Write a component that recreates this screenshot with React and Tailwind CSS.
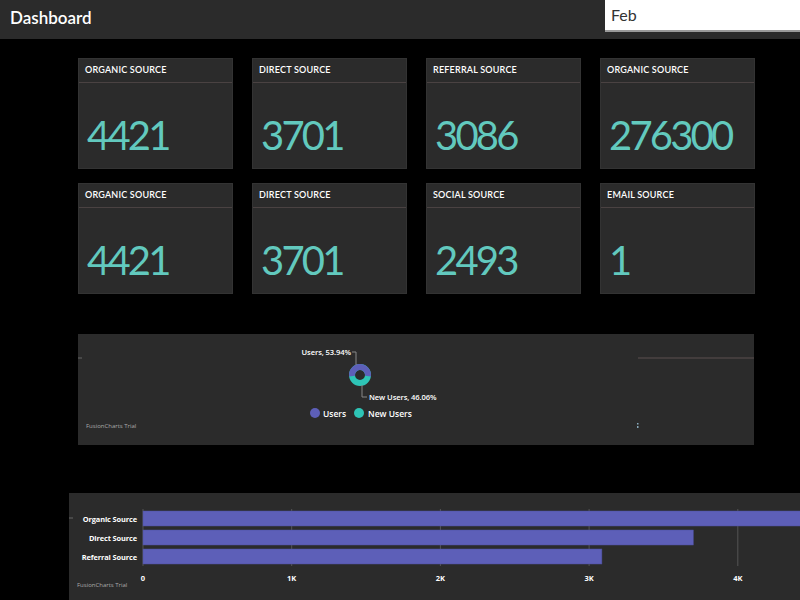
const CARDS = [
  { title: 'ORGANIC SOURCE', value: '4421' },
  { title: 'DIRECT SOURCE', value: '3701' },
  { title: 'REFERRAL SOURCE', value: '3086' },
  { title: 'ORGANIC SOURCE', value: '276300' },
  { title: 'ORGANIC SOURCE', value: '4421' },
  { title: 'DIRECT SOURCE', value: '3701' },
  { title: 'SOCIAL SOURCE', value: '2493' },
  { title: 'EMAIL SOURCE', value: '1' },
];

const BARS = [
  { label: 'Organic Source', value: 4421 },
  { label: 'Direct Source', value: 3701 },
  { label: 'Referral Source', value: 3086 },
];

const chartFont = { fontFamily: '"Open Sans", "Liberation Sans", sans-serif' };

function StatCard({ title, value }) {
  return (
    <div className="h-[111px] bg-[#2b2b2b] border border-[#333] flex flex-col">
      <div className="h-[24px] px-[6px] pt-[5px] border-b border-[#4a4242] text-[9px] leading-[11px] font-semibold text-white tracking-[0.2px]">
        {title}
      </div>
      <div className="flex-1 flex items-end px-[8px] pb-[13px]">
        <span className="text-[40px] leading-[40px] text-[#62c9be] tracking-[-2.8px]">{value}</span>
      </div>
    </div>
  );
}

function DonutPanel() {
  const r = 8;
  const c = 2 * Math.PI * r;
  const users = 0.5394;
  return (
    <div className="mt-[40px] w-[676px] h-[111px] bg-[#2b2b2b]">
      <svg width="676" height="111" style={chartFont}>
        <line x1="0" y1="24" x2="4" y2="24" stroke="#666" />
        <line x1="560" y1="24" x2="676" y2="24" stroke="#4d4545" strokeWidth="1.5" />
        <circle cx="282" cy="41" r={r} fill="none" stroke="#2ec4b6" strokeWidth="6" />
        <circle
          cx="282"
          cy="41"
          r={r}
          fill="none"
          stroke="#5d5fb8"
          strokeWidth="6"
          strokeDasharray={`${c * users} ${c}`}
          transform="rotate(172 282 41)"
        />
        <polyline points="274,18 278,18 278,31" fill="none" stroke="#888" strokeWidth="1" />
        <polyline points="284,51 284,63 289,63" fill="none" stroke="#888" strokeWidth="1" />
        <text x="273" y="21" textAnchor="end" fontSize="7.6" fill="#fff" fontWeight="600" letterSpacing="-0.1">Users, 53.94%</text>
        <text x="291" y="66" fontSize="7.6" fill="#fff" fontWeight="600" letterSpacing="-0.1">New Users, 46.06%</text>
        <circle cx="237" cy="79" r="5" fill="#5d5fb8" />
        <text x="245" y="82.5" fontSize="8.5" fill="#fff" fontWeight="600">Users</text>
        <circle cx="281" cy="79" r="5" fill="#2ec4b6" />
        <text x="290" y="82.5" fontSize="8.5" fill="#fff" fontWeight="600">New Users</text>
        <text x="8" y="94" fontSize="6" fill="#aaa">FusionCharts Trial</text>
        <rect x="559" y="89" width="1.5" height="1.5" fill="#8ab" />
        <rect x="559" y="92" width="1.5" height="2" fill="#8ab" />
      </svg>
    </div>
  );
}

function BarPanel() {
  const x0 = 74;
  const perK = 148.7;
  const ticks = [0, 1, 2, 3, 4];
  return (
    <div className="mt-[48px] -ml-[9px] w-[731px] h-[108px] bg-[#2b2b2b] overflow-hidden">
      <svg width="731" height="108" style={chartFont}>
        <line x1="0" y1="25" x2="4" y2="25" stroke="#666" />
        {ticks.map((t) => (
          <line key={t} x1={x0 + t * perK} y1="16" x2={x0 + t * perK} y2="73" stroke="#555" strokeWidth="1" />
        ))}
        {BARS.map((b, i) => {
          const y = 18 + i * 19;
          return (
            <g key={b.label}>
              <rect x={x0} y={y} width={(b.value / 1000) * perK} height="15" fill="#5d5fb8" stroke="#4d4f9e" strokeWidth="0.5" />
              <text x="68" y={y + 10.5} textAnchor="end" fontSize="7.4" fontWeight="700" fill="#fff" letterSpacing="-0.1">{b.label}</text>
            </g>
          );
        })}
        {ticks.map((t) => (
          <text key={t} x={x0 + t * perK} y="88" textAnchor="middle" fontSize="7.5" fontWeight="700" fill="#fff">
            {t === 0 ? '0' : `${t}K`}
          </text>
        ))}
        <text x="8" y="94" fontSize="6" fill="#aaa">FusionCharts Trial</text>
      </svg>
    </div>
  );
}

export default function App() {
  return (
    <div className="w-[800px] h-[600px] bg-black overflow-hidden font-['Lato',sans-serif]">
      <header className="h-[39px] bg-[#2b2b2b] flex items-start justify-between">
        <h1 className="pl-[10px] pt-[8px] text-[17px] leading-[20px] font-semibold text-white">Dashboard</h1>
        <div className="w-[195px] h-[32px] bg-white border-b-2 border-[#9a9a9a] px-[6px] flex items-center text-[16px] text-[#333]">
          Feb
        </div>
      </header>
      <main className="pl-[78px] pt-[19px]">
        <div className="grid grid-cols-[repeat(4,155px)] gap-x-[19px] gap-y-[14px]">
          {CARDS.map((c, i) => (
            <StatCard key={i} title={c.title} value={c.value} />
          ))}
        </div>
        <DonutPanel />
        <BarPanel />
      </main>
    </div>
  );
}
